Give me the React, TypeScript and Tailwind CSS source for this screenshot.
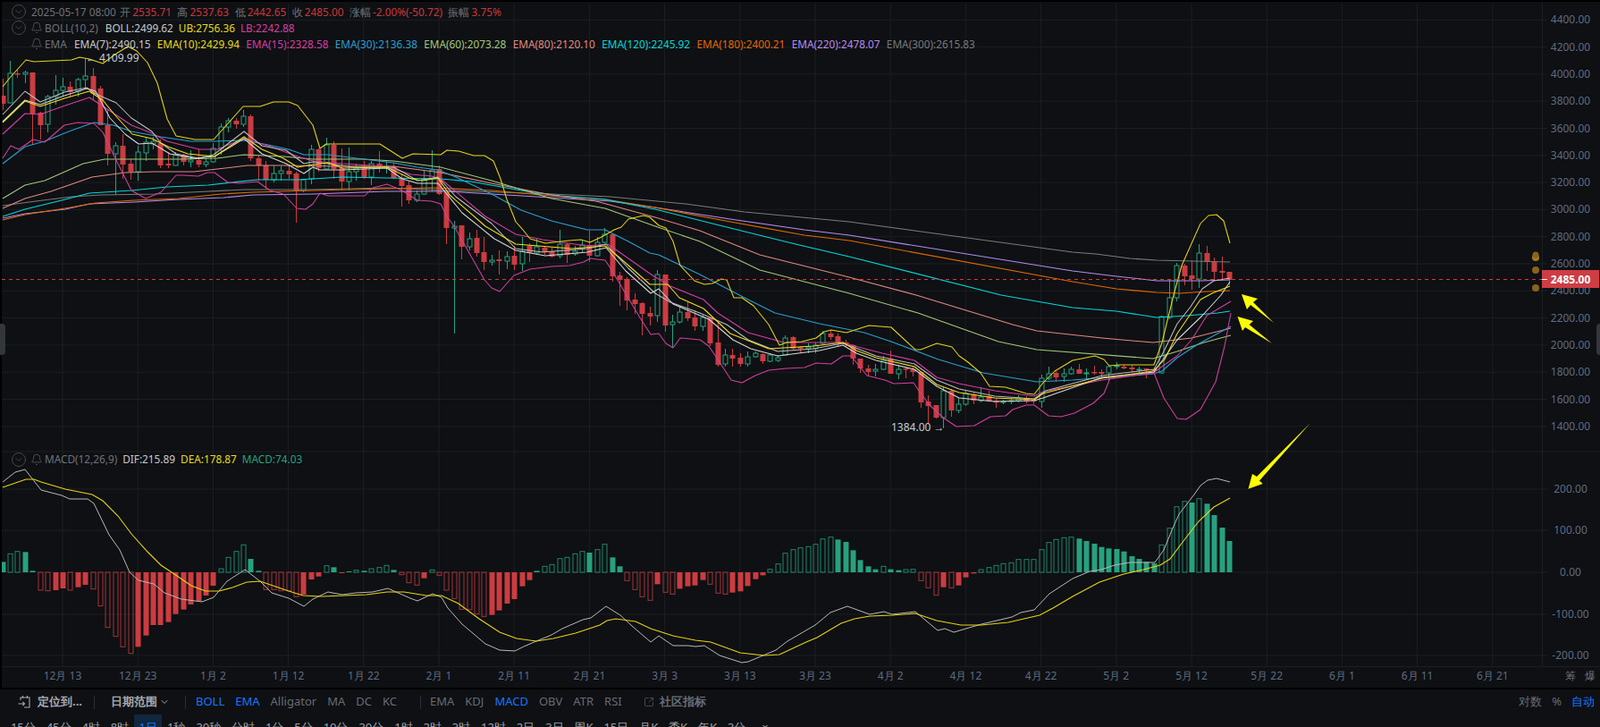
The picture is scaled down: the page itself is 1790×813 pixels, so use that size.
import { Bell, ChevronDown, CircleChevronDown, SquareArrowOutUpRight } from "lucide-react";

// candle tuples: bodyTop, bodyBottom, wickTop, wickBottom, 1 = up (hollow green), 0 = down
type Candle = [number, number, number, number, number];

const candles: Candle[] = [
  [107,116,88,123,0],[82,115,68,115,1],[82,83,78,87,0],[81,83,79,93,1],[81,127,81,162,0],[126,140,125,156,0],
  [108,139,106,148,1],[101,108,84,117,1],[97,101,87,107,1],[97,103,91,109,0],[89,102,87,108,1],[85,89,65,100,1],
  [85,105,76,112,0],[99,140,96,140,0],[140,172,123,185,0],[163,172,159,218,1],[163,184,150,200,0],[183,192,178,201,0],
  [170,192,163,202,1],[159,171,153,180,1],[158,161,153,167,1],[160,185,156,188,0],[183,185,170,188,0],[173,185,170,185,1],
  [173,181,172,185,0],[179,181,168,187,1],[179,184,167,187,0],[181,184,177,187,1],[166,181,160,182,1],[142,166,138,173,1],
  [135,142,132,148,1],[135,139,132,144,0],[130,139,123,142,1],[130,177,128,180,0],[177,185,173,202,0],[185,201,180,211,0],
  [194,201,185,204,1],[191,194,186,202,1],[191,195,185,200,0],[194,213,192,249,0],[201,213,200,215,1],[167,200,162,206,1],
  [167,188,166,192,0],[162,189,154,190,1],[162,189,158,200,0],[188,203,166,213,0],[192,203,165,213,1],[188,192,183,202,1],
  [186,198,180,200,0],[183,198,180,207,1],[183,187,169,193,0],[186,187,180,194,1],[186,199,182,200,0],[199,208,195,231,0],
  [207,224,203,228,0],[217,224,213,226,1],[200,217,191,218,1],[190,200,168,214,1],[189,217,185,218,0],[215,255,215,273,0],
  [253,255,247,373,1],[252,276,252,290,0],[267,276,260,280,1],[266,283,257,287,0],[282,293,265,302,0],[291,293,285,297,1],
  [290,292,280,307,0],[287,292,281,301,1],[286,296,275,302,0],[281,295,265,303,1],[275,283,272,293,0],[276,283,267,285,1],
  [277,282,275,285,0],[281,287,277,288,0],[273,286,257,289,1],[273,285,272,294,0],[281,284,275,286,1],[274,278,268,283,1],
  [274,286,258,293,0],[271,286,265,287,1],[262,271,255,272,1],[262,309,262,315,0],[308,313,304,342,0],[312,336,310,347,0],
  [335,340,328,351,0],[339,351,338,375,0],[350,354,343,364,0],[307,353,302,360,1],[307,364,307,371,0],[360,363,352,389,1],
  [349,360,343,362,1],[349,356,338,359,0],[355,365,347,370,0],[355,365,351,370,1],[355,384,355,387,0],[383,408,360,410,0],
  [397,407,390,410,1],[397,401,390,410,0],[400,407,395,410,0],[399,407,393,410,1],[395,399,393,400,1],[396,404,395,407,0],
  [397,404,395,405,1],[400,403,397,405,1],[378,397,375,397,1],[377,390,376,392,0],[388,390,387,395,0],[388,390,384,395,1],
  [386,390,383,395,1],[373,384,370,385,1],[373,377,370,380,0],[376,383,373,388,0],[383,385,380,388,0],[386,401,385,408,0],
  [401,412,401,417,0],[412,416,408,421,0],[413,415,407,421,1],[403,413,398,414,1],[401,418,392,418,0],[413,418,408,424,1],
  [412,413,410,423,0],[413,416,410,421,0],[416,450,416,456,0],[449,454,442,473,0],[453,467,453,468,0],[437,467,433,479,1],
  [437,459,435,466,0],[452,459,445,462,1],[440,452,437,454,1],[441,448,439,452,0],[444,448,433,450,1],[443,449,437,449,0],
  [448,450,445,456,0],[449,450,447,452,1],[448,449,445,452,1],[445,448,442,450,1],[445,449,443,451,0],[447,449,445,452,0],
  [423,449,419,456,1],[418,423,410,425,1],[417,422,415,427,0],[418,421,412,427,1],[413,418,410,419,1],[413,418,407,418,0],
  [417,418,412,424,1],[416,417,409,419,0],[416,418,413,422,0],[410,417,408,425,1],[409,410,405,413,1],[410,412,408,413,0],
  [411,413,408,417,0],[413,414,410,418,1],[412,414,412,423,0],[413,415,411,417,0],[354,417,353,418,1],[333,355,312,357,1],
  [297,333,294,337,1],[297,309,295,319,0],[308,312,291,324,0],[283,312,273,322,1],[283,293,275,303,0],[293,304,288,313,0],
  [303,305,287,313,0],[304,313,304,319,0],
];

// macd histogram: [height in 1/3 px, 1 = hollow]
const hist: [number, number][] = [
  [35,0],[62,1],[70,1],[68,0],[5,0],[-60,1],[-62,1],[-60,0],[-54,0],[-60,1],[-50,0],[-42,0],[-56,1],[-113,1],[-185,1],[-215,1],
  [-250,1],[-272,1],[-250,0],[-212,0],[-177,0],[-177,0],[-167,0],[-140,0],[-125,0],[-108,0],[-97,0],[-78,0],[-45,0],[12,1],[50,1],[70,1],
  [92,1],[45,0],[5,0],[-58,1],[-58,1],[-62,1],[-62,1],[-82,1],[-75,0],[-24,0],[-14,0],[22,1],[17,0],[-3,0],[3,0],[7,1],
  [5,0],[12,1],[16,1],[23,1],[8,0],[-8,1],[-35,1],[-43,1],[-20,0],[8,1],[-10,1],[-60,1],[-88,1],[-124,1],[-125,1],[-140,1],
  [-148,1],[-143,0],[-128,0],[-105,0],[-90,0],[-47,0],[-26,0],[5,0],[20,1],[26,1],[46,1],[50,1],[62,1],[70,1],[66,0],[76,1],
  [94,1],[50,0],[20,0],[-28,1],[-58,1],[-82,1],[-94,1],[-40,0],[-67,1],[-73,1],[-55,0],[-47,0],[-44,0],[-26,0],[-40,1],[-70,1],
  [-73,1],[-68,0],[-64,0],[-46,0],[-23,0],[-10,0],[10,1],[28,1],[64,1],[76,1],[82,1],[86,1],[94,1],[112,1],[118,1],[110,0],
  [102,0],[74,0],[41,0],[20,0],[10,0],[20,1],[10,0],[7,0],[9,1],[10,1],[-28,1],[-52,1],[-77,1],[-50,0],[-52,1],[-44,0],
  [-17,0],[-4,0],[9,1],[16,1],[23,1],[29,1],[32,1],[43,1],[43,1],[43,1],[76,1],[100,1],[110,1],[116,1],[118,1],[113,0],
  [105,0],[96,0],[85,0],[80,0],[78,0],[70,0],[54,0],[45,0],[35,0],[30,0],[92,1],[148,1],[220,1],[238,1],[234,0],[247,1],
  [230,0],[192,0],[150,0],[105,0],
];

const lines: { color: string; w?: number; d: number[] }[] = [
  // EMA300
  { color: "#7a7a7a", d: [3,230,40,225,80,220,113,218,173,217,213,215,273,212,350,212,433,210,500,213,617,217,683,220,767,228,833,237,950,248,1200,282,1226,284,1264,289,1294,291,1376,293] },
  // EMA220
  { color: "#b48cf0", d: [3,244,28,239,73,234,100,228,150,226,200,223,250,221,283,218,350,217,433,214,500,214,550,217,617,221,683,225,733,232,817,245,900,257,950,263,1200,303,1249,309,1294,314,1343,314,1376,313] },
  // EMA180
  { color: "#e06a00", w: 1.2, d: [3,246,28,240,73,233,107,227,150,224,200,222,247,217,283,215,350,213,433,211,483,210,550,213,617,219,677,223,733,232,817,248,900,263,950,269,1200,315,1249,323,1294,327,1320,328,1350,326,1376,325] },
  // EMA120
  { color: "#00d8de", w: 1.2, d: [3,242,28,234,73,223,100,216,147,213,187,209,233,207,287,201,333,201,383,198,433,199,493,200,527,203,583,213,627,219,677,223,733,234,817,255,890,273,950,287,1120,330,1200,344,1249,348,1294,355,1328,353,1362,350,1376,348] },
  // EMA80
  { color: "#e08a80", d: [3,233,28,222,57,214,103,198,140,193,173,192,217,192,243,189,277,185,317,185,383,186,440,186,493,193,550,205,617,218,667,225,733,243,783,258,850,285,950,310,1025,330,1133,363,1160,370,1233,378,1290,383,1333,378,1377,367] },
  // EMA60
  { color: "#a3c878", d: [3,222,28,207,50,202,93,183,117,178,160,178,200,178,243,177,273,173,317,175,350,178,407,178,440,180,493,187,550,202,617,222,677,233,733,253,783,270,850,302,950,328,1027,350,1117,382,1160,391,1290,401,1317,393,1347,383,1377,375] },
  // EMA30
  { color: "#2a9fd0", w: 1.15, d: [3,183,28,164,50,158,77,147,105,137,127,140,147,147,180,153,213,158,240,158,273,157,300,162,323,167,340,173,367,173,407,178,440,182,467,187,490,190,510,198,550,217,583,235,617,247,657,257,677,257,703,270,727,283,737,285,783,307,833,333,867,350,917,362,967,372,997,382,1050,402,1100,417,1160,427,1200,425,1290,418,1300,415,1317,400,1340,385,1377,365] },
  // LB
  { color: "#d43f9e", d: [3,177,12,163,21,167,37,156,50,159,72,140,87,137,105,138,115,148,127,173,137,193,147,213,163,222,180,215,197,196,205,196,222,197,232,193,240,193,255,204,267,205,288,203,302,213,317,217,332,233,342,234,350,228,358,216,367,219,390,219,408,219,417,210,433,206,448,212,467,224,483,225,493,228,500,242,508,253,542,313,550,322,559,326,575,308,593,301,617,298,637,297,653,293,660,289,677,291,683,300,717,357,728,374,737,373,745,384,753,389,761,378,783,380,793,387,807,408,818,425,830,428,845,420,860,414,880,412,900,411,913,406,930,407,943,398,952,398,970,420,990,425,1000,429,1022,428,1028,437,1040,453,1055,467,1070,477,1090,476,1108,466,1125,465,1133,458,1148,453,1157,453,1173,465,1187,466,1202,462,1223,451,1235,440,1242,423,1250,422,1291,417,1302,445,1317,468,1327,469,1343,458,1360,427,1370,387,1377,350] },
  // EMA15
  { color: "#d63fa3", d: [3,150,28,127,45,128,73,118,100,109,117,120,147,140,170,149,187,158,223,167,243,167,273,155,300,163,333,175,350,180,383,183,430,186,460,195,483,197,493,200,543,242,577,262,607,268,657,275,680,273,693,282,730,308,750,320,787,335,803,350,837,372,877,383,943,383,960,388,987,395,1023,403,1048,422,1073,429,1113,437,1157,443,1167,438,1233,425,1290,417,1317,398,1333,380,1350,353,1377,337] },
  // BOLL mid
  { color: "#bdbdbd", d: [3,128,28,102,45,114,72,103,97,98,107,105,130,115,147,132,170,147,180,160,197,172,222,177,239,173,273,147,293,163,320,168,340,183,350,181,367,183,397,187,440,187,450,192,467,202,490,198,510,220,550,250,577,278,607,282,657,278,678,273,703,300,733,328,750,338,783,350,813,363,837,380,870,393,910,390,943,384,957,389,980,398,1023,407,1048,425,1073,435,1113,443,1157,446,1170,437,1233,420,1291,413,1302,393,1317,362,1332,343,1345,323,1358,314,1376,311] },
  // EMA7
  { color: "#d6d6d6", d: [3,136,28,112,45,117,72,107,97,99,107,102,123,132,140,150,155,161,170,160,190,172,217,177,240,175,273,155,293,172,320,183,340,194,350,187,358,190,383,190,433,188,450,200,467,205,490,205,517,238,553,267,577,280,610,286,657,282,678,277,700,303,728,328,737,323,753,340,793,357,820,380,840,390,870,398,917,392,943,386,958,395,980,403,1023,413,1048,432,1073,445,1113,449,1157,448,1167,445,1233,422,1291,416,1317,380,1345,353,1366,330,1376,315] },
  // EMA10
  { color: "#f0e020", d: [3,137,28,113,45,119,72,110,100,102,115,112,128,128,148,150,170,155,188,164,210,172,240,175,273,153,293,167,317,177,333,187,350,184,367,182,383,188,433,187,460,200,473,202,490,199,503,218,543,253,577,273,640,278,677,275,693,288,727,318,747,318,760,333,787,345,817,373,860,390,910,387,943,383,958,392,980,400,1023,410,1048,430,1073,439,1113,445,1157,447,1167,440,1233,423,1290,415,1303,402,1317,373,1343,335,1356,328,1376,320] },
  // UB
  { color: "#e6d418", d: [3,97,11,87,29,67,38,69,80,67,89,64,100,66,115,71,130,60,143,52,153,57,165,70,176,93,187,133,197,152,218,156,239,156,272,119,291,119,306,114,323,114,333,118,350,140,358,166,365,161,425,161,450,177,462,172,493,173,500,168,513,169,530,174,542,174,552,180,560,200,567,223,577,248,585,257,593,267,610,272,637,269,650,268,660,271,673,265,687,257,695,254,703,245,720,241,727,243,737,252,745,255,753,270,761,297,777,314,788,318,797,317,807,312,813,313,821,333,830,333,843,342,860,363,872,386,880,383,897,382,913,378,922,371,930,369,947,372,972,364,997,366,1024,391,1030,391,1048,384,1065,388,1073,398,1083,405,1097,417,1107,432,1125,433,1148,440,1157,441,1167,428,1180,415,1200,403,1225,398,1235,402,1241,409,1253,408,1291,408,1300,383,1313,330,1322,297,1343,250,1352,241,1361,240,1369,247,1376,272] },
];

const dif = [3,539,17,528,28,525,46,548,69,554,78,558,98,558,105,563,122,598,134,615,145,640,155,649,172,653,184,663,203,670,226,673,239,668,254,650,274,637,291,650,304,663,323,669,340,678,350,670,367,662,383,665,398,663,417,662,434,658,459,669,467,672,484,664,494,668,501,680,517,698,543,720,559,727,576,728,586,723,600,717,617,710,629,703,652,693,661,691,678,678,694,688,707,700,728,718,737,711,753,722,770,722,778,723,788,722,805,733,830,741,837,740,868,727,881,717,912,699,929,685,948,678,973,687,989,684,998,687,1024,684,1049,705,1057,703,1067,707,1098,698,1132,690,1142,685,1157,682,1174,664,1200,647,1219,639,1232,637,1247,632,1264,629,1292,629,1302,615,1311,593,1319,575,1336,553,1343,543,1351,537,1361,535,1376,539];
const dea = [3,545,29,536,38,536,46,539,73,547,103,553,115,560,132,577,147,597,165,617,180,632,195,642,214,655,230,661,245,661,260,657,276,651,291,650,323,661,339,666,360,667,410,665,433,662,452,662,477,666,494,666,513,675,536,692,559,707,578,714,600,717,619,714,644,708,671,699,679,694,689,692,711,695,728,703,753,711,778,716,795,718,828,730,855,733,872,732,902,718,914,713,941,697,956,692,973,689,998,688,1024,686,1048,694,1075,699,1098,699,1128,696,1163,688,1178,680,1200,667,1230,651,1257,642,1279,637,1298,632,1309,625,1324,605,1341,583,1358,567,1376,557];

const priceLabels = [4400,4200,4000,3800,3600,3400,3200,3000,2800,2600,2400,2200,2000,1800,1600,1400];
const priceY = (p: number) => 22.3 + ((4400 - p) / 200) * 30.3;
const macdLabels: [string, number][] = [["200.00",547],["100.00",593],["0.00",640],["-100.00",687],["-200.00",733]];
const dates = ["12月 13","12月 23","1月 2","1月 12","1月 22","2月 1","2月 11","2月 21","3月 3","3月 13","3月 23","4月 2","4月 12","4月 22","5月 2","5月 12","5月 22","6月 1","6月 11","6月 21"];
const dateX = (i: number) => 70 + i * 84.2;
const candleX = (i: number) => 2.6 + i * 8.42;

const RED = "#cb3c41";
const GREEN = "#27a17f";

const pts = (d: number[]) => d.map((v, i) => (i % 2 ? `${v} ` : `${v},`)).join("");

function Chart() {
  return (
    <svg className="absolute inset-0" width={1790} height={767} viewBox="0 2 1790 767">
      {/* grid */}
      {priceLabels.map((p) => (
        <line key={p} x1={2} x2={1731} y1={priceY(p)} y2={priceY(p)} stroke="#1c1e22" />
      ))}
      {macdLabels.map(([l, y]) => (
        <line key={l} x1={2} x2={1731} y1={y} y2={y} stroke="#1c1e22" />
      ))}
      {dates.map((d, i) => (
        <line key={d} x1={dateX(i)} x2={dateX(i)} y1={4} y2={745} stroke="#1c1e22" />
      ))}
      <line x1={1725.5} x2={1725.5} y1={4} y2={745} stroke="#1c1e22" />
      <line x1={2} x2={1790} y1={505} y2={505} stroke="#1c1e22" />
      <line x1={2} x2={1790} y1={745.5} y2={745.5} stroke="#1c1e22" />

      {/* candles */}
      {candles.map(([t, b, wt, wb, up], i) => {
        const x = Math.round(candleX(i)) + 0.5;
        const c = up ? GREEN : RED;
        return (
          <g key={i}>
            <line x1={x} x2={x} y1={wt} y2={wb} stroke={c} />
            {up ? (
              <rect x={x - 2.5} y={t} width={5} height={Math.max(b - t, 1)} fill="#0e1013" stroke={c} />
            ) : (
              <rect x={x - 3} y={t} width={6} height={Math.max(b - t, 1.5)} fill={c} />
            )}
          </g>
        );
      })}

      {/* ema + boll */}
      {lines.map((l) => (
        <polyline key={l.color} points={pts(l.d)} fill="none" stroke={l.color} strokeWidth={l.w ?? 1.05} strokeLinejoin="round" />
      ))}

      {/* last price */}
      <line x1={2} x2={1725} y1={312.5} y2={312.5} stroke="#d9363e" strokeDasharray="4 4" />

      {/* macd */}
      {hist.map(([h, hollow], i) => {
        const x = Math.round(candleX(i)) + 0.5;
        const px = Math.abs(h) / 3;
        const y = h > 0 ? 640 - px : 640;
        const c = h > 0 ? GREEN : RED;
        return hollow ? (
          <rect key={i} x={x - 2.5} y={y} width={5} height={px} fill="none" stroke={c} strokeOpacity={0.8} />
        ) : (
          <rect key={i} x={x - 3} y={y} width={6} height={px} fill={c} />
        );
      })}
      <polyline points={pts(dif)} fill="none" stroke="#b8b8b8" strokeWidth={1} />
      <polyline points={pts(dea)} fill="none" stroke="#e6d418" strokeWidth={1.1} />

      {/* hand drawn arrows */}
      <polygon points="1389,329 1407,334 1402,338 1425,361 1399,341 1395,346" fill="#ffff00" />
      <polygon points="1384.5,354 1402,359 1397.6,363 1423,384 1393,366 1390,370" fill="#ffff00" />
      <polygon points="1396.5,546.7 1412.6,541 1409,537.5 1466,473 1406,533 1401,530" fill="#ffff00" />

      {/* axis text */}
      <g fontSize={12} fill="#5f6b84" textAnchor="middle">
        {priceLabels.map((p) => (
          <text key={p} x={1757} y={priceY(p) + 4}>{p}.00</text>
        ))}
        {macdLabels.map(([l, y]) => (
          <text key={l} x={1757} y={y + 4}>{l}</text>
        ))}
        {dates.map((d, i) => (
          <text key={d} x={dateX(i)} y={760}>{d}</text>
        ))}
      </g>
      <text x={1751} y={760} fontSize={12} fill="#6d7178">筹</text>
      <text x={1773} y={760} fontSize={12} fill="#6d7178">爆</text>

      {/* high / low marks */}
      <text x={96} y={69} fontSize={12} fill="#c4cbd8">← 4109.99</text>
      <text x={997} y={482} fontSize={12} fill="#c4cbd8">1384.00 →</text>

      {/* order dots */}
      <circle cx={1718} cy={288} r={4} fill="#a9771c" />
      <circle cx={1718} cy={285} r={3.5} fill="#8a6318" />
      <circle cx={1718} cy={302} r={4} fill="#8a6318" />
      <circle cx={1718} cy={322} r={4} fill="#8a6318" />

      {/* price tag */}
      <rect x={1725} y={302} width={64} height={20} fill="#cd3d43" />
      <line x1={1725} x2={1731} y1={312.5} y2={312.5} stroke="#fff" />
      <text x={1757} y={316.5} fontSize={12} fontWeight={700} fill="#fff" textAnchor="middle">2485.00</text>
    </svg>
  );
}

const ohlc: [string, string][] = [
  ["开", "2535.71"],
  ["高", "2537.63"],
  ["低", "2442.65"],
  ["收", "2485.00"],
  ["涨幅", "-2.00%(-50.72)"],
  ["振幅", "3.75%"],
];

const emas: [string, string][] = [
  ["EMA(7):2490.15", "text-[#c9c9c9]"],
  ["EMA(10):2429.94", "text-[#e8d91a]"],
  ["EMA(15):2328.58", "text-[#d63fa3]"],
  ["EMA(30):2136.38", "text-[#2a9fd0]"],
  ["EMA(60):2073.28", "text-[#a3c878]"],
  ["EMA(80):2120.10", "text-[#e08a80]"],
  ["EMA(120):2245.92", "text-[#00d8de]"],
  ["EMA(180):2400.21", "text-[#e06a00]"],
  ["EMA(220):2478.07", "text-[#b48cf0]"],
  ["EMA(300):2615.83", "text-[#77797d]"],
];

const Fold = () => <CircleChevronDown size={18} strokeWidth={0.9} className="text-[#5b5e64]" />;
const Alarm = () => <Bell size={14} strokeWidth={1.1} className="ml-[4px] mr-[2px] text-[#6b6e75]" />;

function Legends() {
  return (
    <>
      <div className="absolute left-[12px] top-[2px] flex flex-col text-[11.8px] leading-[18px] text-[#6f7278]">
        <div className="flex h-[18px] items-center">
          <Fold />
          <span className="ml-[5px] mr-[-2px]">2025-05-17 08:00</span>
          {ohlc.map(([k, v]) => (
            <span key={k} className="ml-[6.5px] flex gap-[2px]">
              <span>{k}</span>
              <span className="text-[#c9393e]">{v}</span>
            </span>
          ))}
        </div>
        <div className="flex h-[18px] items-center">
          <Fold />
          <Alarm />
          <span>BOLL(10,2)</span>
          <span className="ml-[8px] text-[#c9c9c9]">BOLL:2499.62</span>
          <span className="ml-[6px] text-[#e8d91a]">UB:2756.36</span>
          <span className="ml-[6px] text-[#d63fa3]">LB:2242.88</span>
        </div>
        <div className="flex h-[18px] items-center pl-[18px]">
          <Alarm />
          <span className="w-[33px]">EMA</span>
          <span className="flex gap-[7.3px]">
            {emas.map(([t, c]) => (
              <span key={t} className={c}>{t}</span>
            ))}
          </span>
        </div>
      </div>
      <div className="absolute left-[12px] top-[503px] flex h-[18px] items-center text-[11.8px] text-[#6f7278]">
        <Fold />
        <Alarm />
        <span>MACD(12,26,9)</span>
        <span className="ml-[6px] text-[#c9c9c9]">DIF:215.89</span>
        <span className="ml-[6px] text-[#e8d91a]">DEA:178.87</span>
        <span className="ml-[6px] text-[#27a17f]">MACD:74.03</span>
      </div>
    </>
  );
}

function LocateIcon() {
  return (
    <svg width={15} height={16} viewBox="0 0 15 16" fill="none" stroke="#a6a9ae" strokeWidth={1.1}>
      <path d="M3 6V3h10v11H7" />
      <path d="M5.5 1v3M10.5 1v3" />
      <path d="M0.5 10h7M5.5 8l2 2-2 2" />
    </svg>
  );
}

const frames = ["15分","45分","4时","8时","1日","1秒","30秒","分时","1分","5分","10分","30分","1时","2时","3时","12时","2日","3日","周K","15日","月K","季K","年K","3分"];

const Divider = () => <span className="block h-[15px] w-px bg-[#2c2e33]" />;

function Toolbar() {
  return (
    <div className="flex h-[28px] items-center pl-[20px] pr-[6px] text-[13px] text-[#676c76]">
      <LocateIcon />
      <span className="ml-[7px] font-bold text-[#a6a9ae]">定位到...</span>
      <span className="ml-[13px]"><Divider /></span>
      <span className="ml-[18px] font-bold text-[#a6a9ae]">日期范围</span>
      <ChevronDown size={12} className="ml-[2px] text-[#a6a9ae]" />
      <span className="ml-[17px] mr-[11px]"><Divider /></span>
      <span className="flex gap-[12px]">
        <span className="text-[#1677ff]">BOLL</span>
        <span className="text-[#1677ff]">EMA</span>
        <span>Alligator</span>
        <span>MA</span>
        <span>DC</span>
        <span>KC</span>
      </span>
      <span className="ml-[26px] mr-[10px]"><Divider /></span>
      <span className="flex gap-[12px]">
        <span>EMA</span>
        <span>KDJ</span>
        <span className="text-[#1677ff]">MACD</span>
        <span>OBV</span>
        <span>ATR</span>
        <span>RSI</span>
      </span>
      <SquareArrowOutUpRight size={12} strokeWidth={1.2} className="ml-[24px] text-[#6b6e75]" />
      <span className="ml-[6px] font-bold">社区指标</span>
      <span className="ml-auto flex gap-[11px]">
        <span>对数</span>
        <span>%</span>
        <span className="text-[#1677ff]">自动</span>
      </span>
    </div>
  );
}

function Frames() {
  return (
    <div className="flex h-[30px] items-center pl-[6px] text-[13px] text-[#a0a3a9]">
      {frames.map((f) => (
        <span
          key={f}
          className={
            f === "1日"
              ? "flex h-full w-[31px] items-center justify-center bg-[#10273d] text-[#1677ff]"
              : "flex h-full items-center px-[5.95px]"
          }
        >
          {f}
        </span>
      ))}
      <span className="px-[12px]">×</span>
    </div>
  );
}

export default function App() {
  return (
    <div className="h-[813px] w-[1790px] overflow-hidden bg-[#0e1013] [font-family:Roboto,'Noto_Sans_CJK_SC',sans-serif]">
      <div className="h-[2px] bg-black" />
      <div className="relative h-[767px]">
        <Chart />
        <Legends />
        <div className="absolute left-0 top-0 h-full w-[2px] bg-black" />
        <div className="absolute left-0 top-[360px] h-[35px] w-[6px] rounded-r-sm bg-[#33363b]" />
        <div className="absolute right-0 top-[360px] h-[35px] w-[4px] rounded-l-sm bg-[#33363b]" />
      </div>
      <div className="h-[2px] bg-black" />
      <Toolbar />
      <Frames />
    </div>
  );
}
